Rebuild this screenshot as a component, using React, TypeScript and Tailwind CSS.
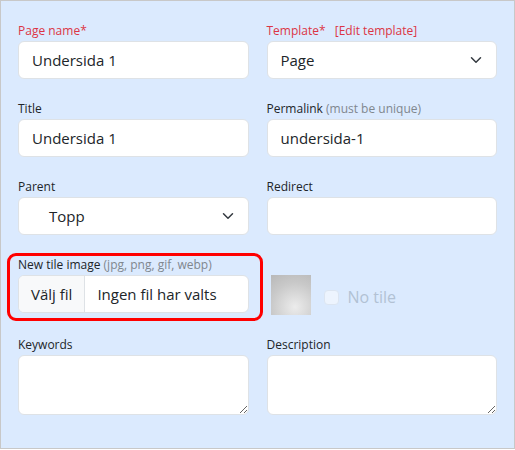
import React from 'react';

const font = { fontFamily: '"Open Sans", "Noto Sans", sans-serif' };

const Chevron: React.FC = () => (
  <svg width="16" height="12" viewBox="0 0 16 16" className="shrink-0">
    <path d="m2 5 6 6 6-6" fill="none" stroke="#343a40" strokeWidth="2" strokeLinecap="round" strokeLinejoin="round" />
  </svg>
);

const Label: React.FC<{ children: React.ReactNode; red?: boolean }> = ({ children, red }) => (
  <div className={`text-[12px] leading-[18px] mb-px whitespace-nowrap ${red ? 'text-[#dc3545]' : 'text-[#212529]'}`}>
    {children}
  </div>
);

const inputBox = 'h-[38px] w-full bg-white border border-[#dee2e6] rounded-[6px] flex items-center text-[15px] text-[#212529]';

export default function App() {
  return (
    <div style={font} className="w-[515px] h-[449px] bg-[#dbeafe] border border-[#c8c8c8] px-[17px] pt-[21px]">
      <div className="grid grid-cols-2 gap-x-[18px] gap-y-[21px]">
        <div>
          <Label red>Page name*</Label>
          <div className={`${inputBox} px-[13px]`}>Undersida 1</div>
        </div>
        <div>
          <Label red>
            Template* <span className="ml-[6px]">[Edit template]</span>
          </Label>
          <div className={`${inputBox} pl-[13px] pr-[12px] justify-between`}>
            <span>Page</span>
            <Chevron />
          </div>
        </div>

        <div>
          <Label>Title</Label>
          <div className={`${inputBox} px-[13px]`}>Undersida 1</div>
        </div>
        <div>
          <Label>
            Permalink <span className="text-[#80878e]">(must be unique)</span>
          </Label>
          <div className={`${inputBox} px-[13px]`}>undersida-1</div>
        </div>

        <div>
          <Label>Parent</Label>
          <div className={`${inputBox} pl-[30px] pr-[12px] justify-between`}>
            <span>Topp</span>
            <Chevron />
          </div>
        </div>
        <div>
          <Label>Redirect</Label>
          <div className={inputBox}></div>
        </div>

        <div className="relative">
          <Label>
            New tile image <span className="text-[#80878e]">(jpg, png, gif, webp)</span>
          </Label>
          <div className={`${inputBox} overflow-hidden`}>
            <div className="h-full px-[12px] flex items-center bg-[#f8f9fa] border-r border-[#dee2e6]">Välj fil</div>
            <div className="px-[12px]">Ingen fil har valts</div>
          </div>
          <div className="absolute -left-[11px] -top-[3px] -right-[14px] -bottom-[8px] border-[3px] border-[#ff0000] rounded-[9px] pointer-events-none"></div>
        </div>
        <div className="flex items-end pl-[4px]">
          <div className="w-[40px] h-[40px] -mb-[2px] bg-[radial-gradient(circle_at_60%_80%,#ececec_0%,#c9c9c9_60%,#b8b8b8_100%)]"></div>
          <div className="flex items-center h-[40px] ml-[13px] translate-y-[4px] opacity-50">
            <div className="w-[15px] h-[15px] rounded-[4px] bg-white border border-[#dee2e6]"></div>
            <span className="ml-[9px] text-[16px] text-[#8a9aab]">No tile</span>
          </div>
        </div>

        <div className="mt-[2px]">
          <Label>Keywords</Label>
          <textarea className="block h-[60px] w-full bg-white border border-[#dee2e6] rounded-[6px] outline-none"></textarea>
        </div>
        <div className="mt-[2px]">
          <Label>Description</Label>
          <textarea className="block h-[60px] w-full bg-white border border-[#dee2e6] rounded-[6px] outline-none"></textarea>
        </div>
      </div>
    </div>
  );
}
